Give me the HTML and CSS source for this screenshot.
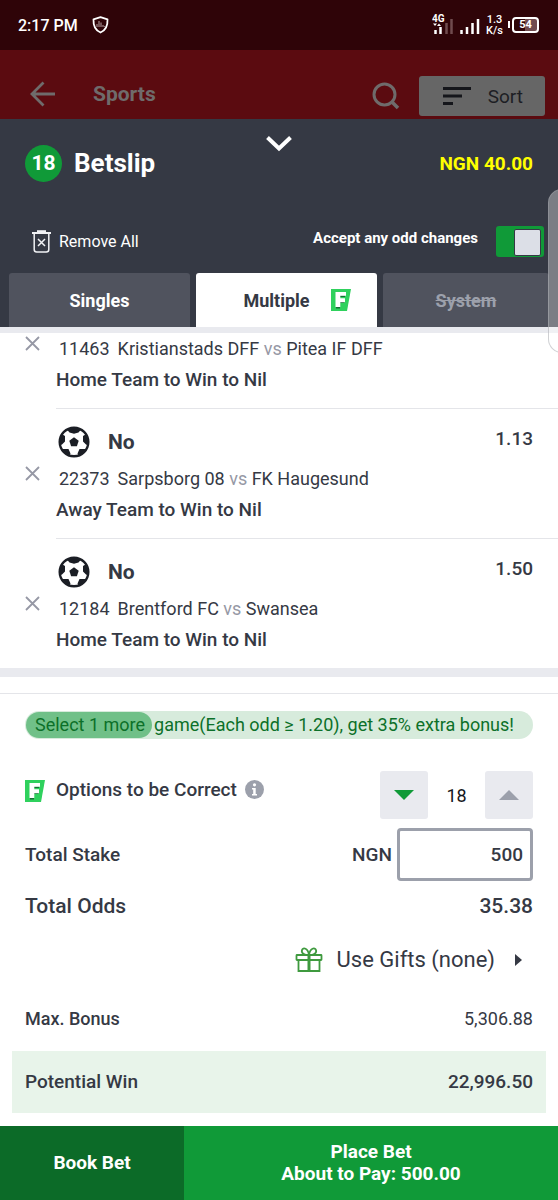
FILE: index.html
```html
<!DOCTYPE html>
<html lang="en">
<head>
  <meta charset="UTF-8" />
  <meta name="viewport" content="width=device-width, initial-scale=1" />
  <title>Betslip</title>
  <link rel="stylesheet" href="styles.css">
</head>
<body>

<!-- Shared icons -->
<svg class="sprite" aria-hidden="true">
  <symbol id="ball" viewBox="0 0 32 32">
    <circle cx="16" cy="16" r="14.5" fill="#fff"/>
    <path fill="#1b1e25" d="M16 11.300l4.700 3.400-1.800 5.500h-5.800l-1.800-5.500z"/>
    <path fill="#1b1e25" d="M8.500 3h15l-3 3.500-4.500 1.300-4.500-1.300zM1.500 16L3 7.500l4 2.500v5.500l-3.500 3.500zM30.500 16L29 7.500 25 10v5.500l3.500 3.500zM3.500 23h7l2 4.500-1.500 3zM28.500 23h-7l-2 4.500 1.500 3z"/>
    <circle cx="16" cy="16" r="14.300" fill="none" stroke="#1b1e25" stroke-width="2.400"/>
  </symbol>
  <symbol id="cross" viewBox="0 0 16 16">
    <path d="M1 1l13 13M14 1l-13 13" fill="none" stroke="#9698a5" stroke-width="1.800"/>
  </symbol>
  <symbol id="flex" viewBox="0 0 20 22">
    <path fill="#2fd15d" d="M0 0h20l-4 22H0z"/>
    <path fill="#186b35" d="M5 18h4v1.500H5zM9 6.500h5V8H9zM9 13h4.500v1H9z"/>
    <path fill="#fff" d="M4.500 3h10.500v3.700H9.300v2.600H14v3.900H9.300V18H4.500z"/>
  </symbol>
</svg>

<div class="status-bar">
  <span class="clock">2:17 PM</span>
  <svg class="shield" width="17" height="18" viewBox="0 0 17 18">
    <path d="M8.500 1.200L15.500 3.300c.3 6-1.500 11-7 13.200C3 14.300 1.200 9.300 1.500 3.300z" fill="none" stroke="#fff" stroke-width="1.800" stroke-linejoin="round"/>
    <path d="M5 11V8M7 11V5M9 11V6.500M11 11V9M12.800 11v-1" stroke="#b9a3a5" stroke-width="1"/>
  </svg>
  <svg class="signal" width="22" height="20" viewBox="0 0 22 20">
    <text x="0" y="8" class="signal-type">4G</text>
    <path d="M1 9.500h4l-2 2.500zM5 12h4L7 9.500z" fill="#fff"/>
    <path d="M3.500 16v4M8.500 13v7" stroke="#fff" stroke-width="2.500"/>
    <path d="M14.500 9v11M19.500 5v15" stroke="#704b4e" stroke-width="2.500"/>
  </svg>
  <svg class="signal" width="20" height="20" viewBox="0 0 20 20">
    <path d="M1.500 16v4M7 13v7M12.500 9v11M18 5v15" stroke="#fff" stroke-width="2.500"/>
  </svg>
  <span class="net-speed"><span>1.3</span><span>K/s</span></span>
  <span class="battery">54</span>
</div>

<header class="app-header">
  <button class="icon-btn" aria-label="Back">
    <svg width="26" height="26" viewBox="0 0 26 26"><path d="M13.500 1.500L2 13l11.500 11.500M2 13h23" fill="none" stroke="#6f6b6b" stroke-width="2.800"/></svg>
  </button>
  <h1>Sports</h1>
  <button class="icon-btn search-btn" aria-label="Search">
    <svg width="28" height="28" viewBox="0 0 28 28"><circle cx="12.500" cy="12.500" r="10.500" fill="none" stroke="#6f6b6b" stroke-width="3"/><path d="M19.500 19.500l6.500 6.500" stroke="#6f6b6b" stroke-width="3.500"/></svg>
  </button>
  <button class="sort-btn">
    <svg width="28" height="20" viewBox="0 0 28 20"><path d="M0 2.500h28M0 10h19M0 17.500h10" stroke="#15161b" stroke-width="3"/></svg>
    Sort
  </button>
</header>

<section class="betslip-top">
  <div class="betslip-head">
    <div class="betslip-title">
      <span class="count">18</span>
      <h2>Betslip</h2>
    </div>
    <button class="icon-btn collapse-btn" aria-label="Collapse">
      <svg width="26" height="16" viewBox="0 0 26 16"><path d="M1.500 1.500L13 12.500 24.500 1.500" fill="none" stroke="#fff" stroke-width="4"/></svg>
    </button>
    <span class="balance">NGN 40.00</span>
  </div>

  <div class="betslip-tools">
    <button class="remove-all">
      <svg width="19" height="23" viewBox="0 0 19 23" fill="none" stroke="#f1f2f5" stroke-width="1.500">
        <path d="M0 3h19" stroke-width="2"/><path d="M5 1.200h9" stroke-width="2"/>
        <path d="M2.200 4v15.500q0 2.500 2.500 2.500h9.600q2.500 0 2.500-2.500V4"/>
        <path d="M6 9l7 7M13 9l-7 7"/>
      </svg>
      Remove All
    </button>
    <label class="odd-changes" for="odd-changes">Accept any odd changes</label>
    <input class="toggle" type="checkbox" id="odd-changes" checked>
  </div>

  <nav class="tabs">
    <button class="tab">Singles</button>
    <button class="tab tab-active">Multiple <svg width="20" height="22"><use href="#flex"/></svg></button>
    <button class="tab tab-disabled" disabled>System</button>
  </nav>
  <div class="edge-handle"></div>
</section>

<main>
  <ul class="bets">
    <li class="bet bet-scrolled">
      <button class="icon-btn remove-btn" aria-label="Remove"><svg width="16" height="16"><use href="#cross"/></svg></button>
      <div class="bet-info">
        <p class="teams"><span class="code">11463</span>Kristianstads DFF <span class="vs">vs</span> Pitea IF DFF</p>
        <p class="market">Home Team to Win to Nil</p>
      </div>
    </li>
    <li class="bet">
      <button class="icon-btn remove-btn" aria-label="Remove"><svg width="16" height="16"><use href="#cross"/></svg></button>
      <div class="bet-info">
        <div class="pick">
          <svg width="32" height="32"><use href="#ball"/></svg>
          <strong>No</strong>
          <span class="odd">1.13</span>
        </div>
        <p class="teams"><span class="code">22373</span>Sarpsborg 08 <span class="vs">vs</span> FK Haugesund</p>
        <p class="market">Away Team to Win to Nil</p>
      </div>
    </li>
    <li class="bet">
      <button class="icon-btn remove-btn" aria-label="Remove"><svg width="16" height="16"><use href="#cross"/></svg></button>
      <div class="bet-info">
        <div class="pick">
          <svg width="32" height="32"><use href="#ball"/></svg>
          <strong>No</strong>
          <span class="odd">1.50</span>
        </div>
        <p class="teams"><span class="code">12184</span>Brentford FC <span class="vs">vs</span> Swansea</p>
        <p class="market">Home Team to Win to Nil</p>
      </div>
    </li>
  </ul>

  <div class="summary">
    <p class="bonus"><span class="bonus-step">Select 1 more</span>game(Each odd ≥ 1.20), get 35% extra bonus!</p>

    <div class="row options">
      <div class="options-label">
        <svg class="options-logo" width="20" height="22"><use href="#flex"/></svg>
        <span>Options to be Correct</span>
        <svg width="19" height="19" viewBox="0 0 19 19"><circle cx="9.500" cy="9.500" r="9.500" fill="#9ca0ab"/><circle cx="9.500" cy="4.800" r="1.600" fill="#fff"/><path d="M7 8h3.700v6H12v1.500H7V14h1.200V9.500H7z" fill="#fff"/></svg>
      </div>
      <div class="stepper">
        <button aria-label="Fewer"><svg width="20" height="10" viewBox="0 0 20 10"><path d="M0 0h20L10 10z" fill="#109a38"/></svg></button>
        <output>18</output>
        <button aria-label="More"><svg width="20" height="10" viewBox="0 0 20 10"><path d="M0 10h20L10 0z" fill="#9ca0ab"/></svg></button>
      </div>
    </div>

    <div class="row">
      <label for="stake">Total Stake</label>
      <div class="stake">
        <span>NGN</span>
        <input type="text" id="stake" inputmode="decimal" value="500">
      </div>
    </div>

    <div class="row total-odds">
      <span>Total Odds</span>
      <span>35.38</span>
    </div>

    <div class="row gifts">
      <button class="gifts-btn">
        <svg width="28" height="26" viewBox="0 0 28 26" fill="none" stroke="#3f9a3f" stroke-width="1.800">
          <rect x="1.500" y="8" width="25" height="5" rx=".500"/>
          <path d="M3.500 13v11h21V13"/>
          <path d="M14 8v16" stroke-width="3"/>
          <path d="M14 8c-5 0-8-2-7-5s6-2 7 5zM14 8c5 0 8-2 7-5s-6-2-7 5z"/>
        </svg>
        <span>Use Gifts (none)</span>
        <svg class="gifts-arrow" width="7" height="12" viewBox="0 0 7 12"><path d="M0 0l7 6-7 6z" fill="#353944"/></svg>
      </button>
    </div>

    <div class="row max-bonus">
      <span>Max. Bonus</span>
      <span class="amount">5,306.88</span>
    </div>

    <div class="row potential">
      <span>Potential Win</span>
      <span>22,996.50</span>
    </div>
  </div>
</main>

<footer class="actions">
  <button class="book-btn">Book Bet</button>
  <button class="place-btn">Place Bet<br>About to Pay: 500.00</button>
</footer>

</body>
</html>
```
FILE: styles.css
```css
* {
  box-sizing: border-box;
}
body {
  margin: 0;
  font-family: Roboto, "Liberation Sans", sans-serif;
  font-size: 18px;
  color: #353944;
  background: white;
}
h1, h2, p, ul {
  margin: 0;
  padding: 0;
}
svg {
  display: block;
  flex: none;
}
button {
  font: inherit;
  color: inherit;
  border: none;
  background: none;
  padding: 0;
  cursor: pointer;
}
.sprite {
  position: absolute;
  width: 0;
  height: 0;
}

/* Phone status bar */
.status-bar {
  display: flex;
  align-items: center;
  height: 50px;
  padding: 0 19px 0 18px;
  background: #2f0408;
  color: white;
}
.clock {
  font-size: 16px;
  font-weight: 500;
}
.shield {
  margin: 0 auto 0 14px;
}
.signal {
  margin: 0 6px 2px 0;
}
.signal-type {
  font-size: 10px;
  font-weight: bold;
  fill: white;
}
.net-speed {
  display: flex;
  flex-direction: column;
  margin-right: 9px;
  font-size: 11px;
  line-height: 11px;
  font-weight: 500;
  text-align: center;
}
.battery {
  position: relative;
  width: 27px;
  border: 2px solid white;
  border-radius: 4px;
  background: linear-gradient(90deg, transparent 50%, #704b4e 50%);
  font-size: 11px;
  line-height: 12px;
  font-weight: bold;
  text-align: center;
}
.battery::before {
  content: "";
  position: absolute;
  left: -6px;
  top: 2px;
  width: 2px;
  height: 7px;
  background: white;
}

/* Dimmed page header */
.app-header {
  display: flex;
  align-items: center;
  height: 69px;
  padding: 23px 13px 0 30px;
  background: #5b0b10;
}
.app-header h1 {
  margin: 0 auto 4px 37px;
  font-size: 21px;
  line-height: 24px;
  font-weight: bold;
  color: #6f6b6b;
}
.app-header > .icon-btn {
  margin-bottom: 4px;
}
.app-header > .search-btn {
  margin: 0 19px 0 0;
}
.sort-btn {
  display: flex;
  align-items: center;
  gap: 17px;
  height: 40px;
  padding: 0 22px 0 24px;
  border-radius: 3px;
  background: #666;
  color: #1d1e24;
  font-size: 19px;
}

/* Betslip panel */
.betslip-top {
  position: relative;
  background: #353944;
  color: white;
}
.betslip-head {
  display: grid;
  grid-template-columns: 1fr auto 1fr;
  align-items: center;
  height: 71px;
  padding: 17px 25px 0;
}
.betslip-title {
  display: flex;
  align-items: center;
  gap: 12px;
}
.count {
  width: 37px;
  border-radius: 50%;
  background: #109a38;
  font-size: 21px;
  line-height: 37px;
  font-weight: bold;
  text-align: center;
}
.betslip-title h2 {
  font-size: 26px;
  font-weight: bold;
}
.collapse-btn {
  align-self: start;
}
.balance {
  font-size: 19px;
  font-weight: bold;
  color: #ffff00;
  text-align: right;
}
.betslip-tools {
  display: flex;
  align-items: center;
  padding: 36px 14px 16px 32px;
  font-size: 16px;
}
.remove-all {
  display: flex;
  align-items: center;
  gap: 8px;
  margin-right: auto;
}
.odd-changes {
  align-self: flex-start;
  font-size: 15px;
  line-height: 24px;
  font-weight: bold;
}
.toggle {
  appearance: none;
  width: 48px;
  height: 31px;
  margin: 0 0 0 18px;
  padding: 3px;
  border-radius: 3px;
  background: #6c707a;
}
.toggle::before {
  content: "";
  display: block;
  width: 25px;
  height: 25px;
  border: 1px solid #353944;
  border-radius: 2px;
  background: #dcdfe7;
}
.toggle:checked {
  background: #109a38;
}
.toggle:checked::before {
  margin-left: auto;
}
.tabs {
  display: grid;
  grid-template-columns: 181fr 181fr 166fr;
  gap: 6px;
  padding: 0 9px;
  border-bottom: 6px solid #e9eaef;
}
.tab {
  display: flex;
  align-items: center;
  justify-content: center;
  height: 54px;
  border-radius: 3px 3px 0 0;
  background: #50535e;
  font-weight: bold;
}
.tab-active {
  gap: 21px;
  padding-left: 21px;
  background: white;
  color: #353944;
}
.tab-disabled {
  color: #9ca0ab;
  text-decoration: line-through;
}
.edge-handle {
  position: absolute;
  top: 70px;
  right: -20px;
  width: 30px;
  height: 164px;
  border: 1px solid rgba(160, 162, 168, 0.5);
  border-radius: 14px;
  background: rgba(255, 255, 255, 0.35);
  clip-path: inset(0 20px 0 0);
}

/* Selections */
.bets {
  list-style: none;
  overflow: hidden;
  border-bottom: 9px solid #e9eaef;
}
.bet {
  display: flex;
  align-items: center;
}
.bet-scrolled {
  margin-top: -54px;
}
.remove-btn {
  padding: 4px;
  margin: 0 11px 0 21px;
}
.bet-info {
  flex: 1;
  display: flex;
  flex-direction: column;
  justify-content: flex-end;
  height: 130px;
  padding-bottom: 13px;
  border-bottom: 1px solid #e4e5e9;
}
.bet:last-child .bet-info {
  height: 129px;
  padding-bottom: 12px;
  border-color: transparent;
}
.pick {
  display: flex;
  align-items: center;
  padding: 0 25px 5px 2px;
}
.pick strong {
  margin: 0 auto 0 18px;
  font-size: 21px;
}
.odd {
  margin-bottom: 8px;
  font-size: 19px;
  font-weight: 500;
}
.teams, .market {
  line-height: 31px;
}
.teams {
  padding-left: 3px;
}
.code {
  margin-right: 8px;
}
.vs {
  color: #9698a5;
}
.market {
  font-size: 19px;
  font-weight: 500;
}

/* Stake and totals */
.summary {
  margin-top: 16px;
  padding: 17px 0 13px;
  border-top: 1px solid #e4e5e9;
  font-size: 19px;
  font-weight: 500;
}
.bonus {
  margin: 0 25px 32px;
  border-radius: 14px;
  background: #d7ebdc;
  color: #0c7029;
  font-size: 18px;
  font-weight: 400;
  line-height: 28px;
  white-space: nowrap;
}
.bonus-step {
  display: inline-block;
  margin: 0 2px 0 1px;
  padding: 0 7px 0 9px;
  border-radius: 13px;
  background: #70c088;
  line-height: 26px;
}
.row {
  display: flex;
  align-items: center;
  justify-content: space-between;
  padding: 0 25px;
}
.options {
  margin-bottom: 9px;
}
.options-label {
  display: flex;
  align-items: center;
  gap: 8px;
  margin-bottom: 12px;
}
.options-logo {
  margin: 4px 3px 0 0;
}
.stepper {
  display: grid;
  grid-template-columns: 48px 57px 48px;
  align-items: center;
}
.stepper button {
  display: flex;
  align-items: center;
  justify-content: center;
  height: 48px;
  border-radius: 3px;
  background: #e9eaef;
}
.stepper output {
  font-size: 18px;
  font-weight: 400;
  color: #15161b;
  text-align: center;
}
.stake {
  display: flex;
  align-items: center;
  gap: 5px;
}
.stake input {
  width: 136px;
  height: 53px;
  padding: 0 7px;
  border: 3px solid #9ca0ab;
  border-radius: 4px;
  background: white;
  font: inherit;
  color: inherit;
  text-align: right;
}
.total-odds {
  font-size: 21px;
  line-height: 50px;
}
.gifts {
  justify-content: flex-end;
}
.gifts-btn {
  display: flex;
  align-items: center;
  gap: 14px;
  padding-right: 11px;
  font-size: 22px;
  line-height: 58px;
  font-weight: 400;
}
.gifts-arrow {
  margin-left: 6px;
}
.max-bonus {
  font-size: 18px;
  line-height: 60px;
}
.amount {
  font-weight: 400;
}
.potential {
  margin: 2px 12px 0;
  padding: 0 13px;
  background: #e8f4ea;
  line-height: 62px;
}

/* Bottom buttons */
.actions {
  display: grid;
  grid-template-columns: 33% 67%;
  color: white;
}
.actions button {
  height: 74px;
  font-size: 19px;
  font-weight: bold;
  line-height: 22px;
}
.book-btn {
  background: #0c6b28;
}
.place-btn {
  background: #109a38;
}
```
